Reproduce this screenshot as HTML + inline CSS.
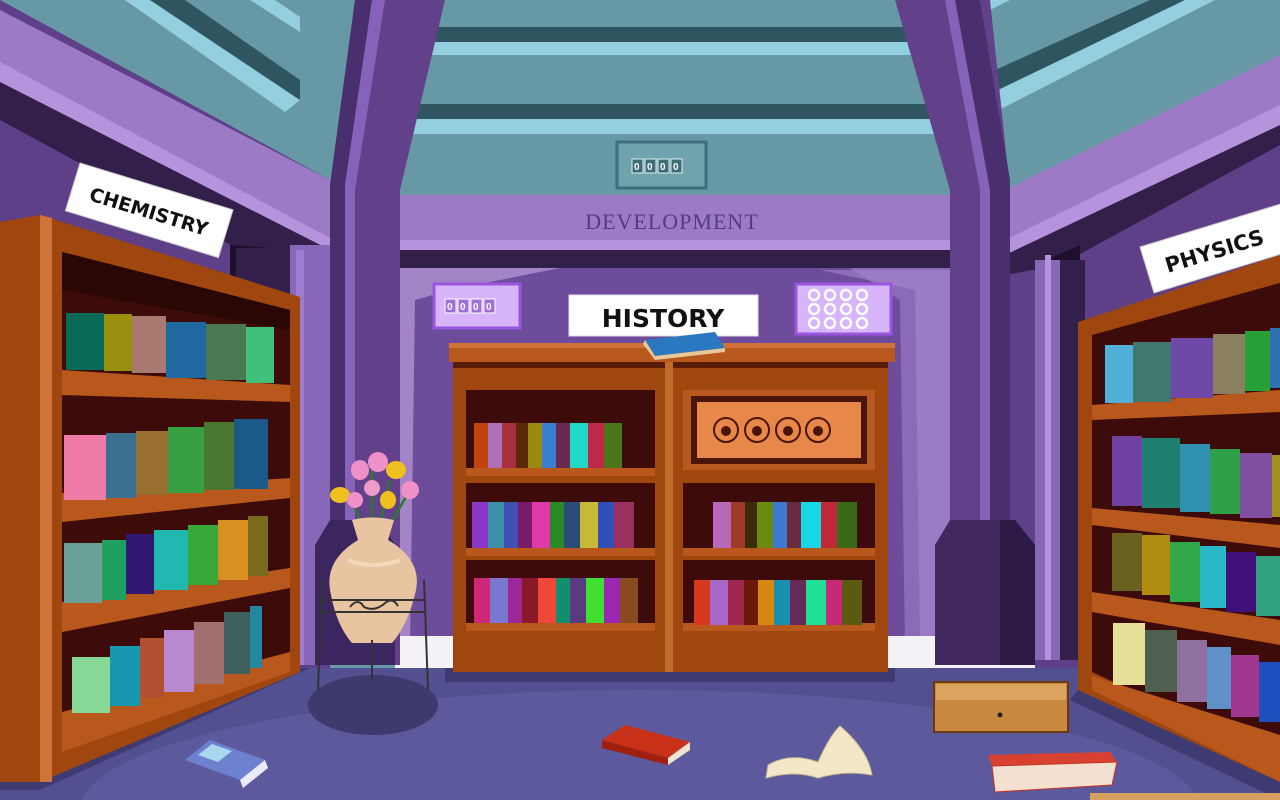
<!DOCTYPE html>
<html><head><meta charset="utf-8"><style>html,body{margin:0;padding:0;width:1280px;height:800px;overflow:hidden;background:#6699a5}svg{display:block}</style></head>
<body>
<svg width="1280" height="800" viewBox="0 0 1280 800" xmlns="http://www.w3.org/2000/svg">
<rect width="1280" height="800" fill="#6699a5"/>
<polygon points="125,0 150,0 300,100 285,112" fill="#93cfdf"/>
<polygon points="150,0 185,0 300,80 300,100" fill="#2f5560"/>
<polygon points="250,0 275,0 300,17 300,32" fill="#93cfdf"/>
<polygon points="1150,0 1185,0 940,118 940,95" fill="#2f5560"/>
<polygon points="1185,0 1215,0 940,140 940,118" fill="#93cfdf"/>
<polygon points="985,0 1010,0 940,35 940,20" fill="#93cfdf"/>
<rect x="400" y="27" width="550" height="15" fill="#2f5560"/>
<rect x="400" y="42" width="550" height="13" fill="#93cfdf"/>
<rect x="400" y="104" width="550" height="15" fill="#2f5560"/>
<rect x="400" y="119" width="550" height="15" fill="#93cfdf"/>
<rect x="617" y="142" width="89" height="46" fill="#6fa3ae" stroke="#3f6f7a" stroke-width="3"/>
<g fill="#3d6b76" stroke="#e0f0f4" stroke-width="1"><rect x="632" y="159" width="11" height="14"/><rect x="645" y="159" width="11" height="14"/><rect x="658" y="159" width="11" height="14"/><rect x="671" y="159" width="11" height="14"/></g>
<g font-family="Liberation Sans,sans-serif" font-size="10" fill="#fff" font-weight="bold"><text x="634" y="170">0</text><text x="647" y="170">0</text><text x="660" y="170">0</text><text x="673" y="170">0</text></g>
<polygon points="0,0 0,780 330,700 330,180" fill="#5e3f88"/>
<polygon points="0,10 0,70 330,245 330,180" fill="#9d7ac6"/>
<polygon points="0,62 0,82 330,250 330,238" fill="#b793dd"/>
<polygon points="0,82 0,120 240,250 330,265 330,250" fill="#33204a"/>
<polygon points="230,245 300,250 300,300 230,300" fill="#1e0f2c"/>
<rect x="236" y="248" width="55" height="420" fill="#33204a"/>
<rect x="290" y="245" width="40" height="420" fill="#8866b8"/>
<rect x="296" y="250" width="8" height="415" fill="#9f7cd0"/>
<polygon points="1010,250 1280,130 1280,780 1010,680" fill="#5e3f88"/>
<polygon points="1005,190 1280,55 1280,115 1005,250" fill="#9d7ac6"/>
<polygon points="1005,240 1280,105 1280,128 1005,258" fill="#b793dd"/>
<polygon points="1005,255 1280,125 1280,145 1060,265 1005,275" fill="#33204a"/>
<polygon points="1035,265 1080,245 1080,330 1035,330" fill="#1e0f2c"/>
<rect x="1035" y="260" width="30" height="400" fill="#8866b8"/>
<rect x="1045" y="255" width="6" height="405" fill="#b793dd"/>
<rect x="1060" y="260" width="25" height="400" fill="#33204a"/>
<rect x="395" y="195" width="560" height="46" fill="#9d7ac6"/>
<rect x="395" y="240" width="560" height="10" fill="#b793dd"/>
<rect x="395" y="250" width="560" height="18" fill="#33204a"/>
<rect x="395" y="268" width="560" height="380" fill="#6e4c9c"/>
<polygon points="400,268 560,268 450,290 415,300 410,648 400,648" fill="#a384c6"/>
<polygon points="850,268 955,268 955,648 905,648 900,300" fill="#8a6bb8"/>
<polygon points="820,270 955,270 955,640 920,640 915,290" fill="#a585cb" opacity="0.6"/>
<text x="672" y="229" text-anchor="middle" font-family="Liberation Serif,serif" font-size="22" fill="#563b7e" letter-spacing="1">DEVELOPMENT</text>
<rect x="395" y="636" width="640" height="32" fill="#f4f2f6"/>
<polygon points="355,0 445,0 400,190 400,665 330,665 330,185" fill="#62418a"/>
<polygon points="355,0 372,0 345,185 345,665 330,665 330,185" fill="#4a2f6e"/>
<polygon points="372,0 385,0 355,190 355,665 345,665 345,185" fill="#8663b8"/>
<polygon points="895,0 990,0 1010,190 1010,665 950,665 950,190" fill="#62418a"/>
<polygon points="955,0 980,0 1010,180 1010,665 990,665 990,190" fill="#4a2f6e"/>
<polygon points="945,0 955,0 990,190 990,665 980,665 980,190" fill="#8663b8"/>
<polygon points="950,520 1000,520 1000,665 935,665 935,545" fill="#41285f"/>
<polygon points="1000,520 1015,520 1035,545 1035,665 1000,665" fill="#2d1a47"/>
<polygon points="330,520 380,520 395,545 395,665 315,665 315,545" fill="#3c2660"/>
<polygon points="0,668 1280,668 1280,800 0,800" fill="#535092"/>
<ellipse cx="640" cy="810" rx="560" ry="120" fill="#5c5a9c"/>
<polygon points="0,780 300,668 310,668 40,790 0,790" fill="#3e3a72"/>
<polygon points="1078,690 1280,782 1280,800 1070,700" fill="#3e3a72"/>
<ellipse cx="373" cy="705" rx="65" ry="30" fill="#3d3a6e"/>
<rect x="445" y="668" width="450" height="14" fill="#3e3a72"/>
<rect x="434" y="284" width="86" height="44" fill="#d8b4fb" stroke="#9a55e0" stroke-width="3"/>
<g fill="#a070d8" stroke="#fff" stroke-width="1"><rect x="445" y="299" width="11" height="14"/><rect x="458" y="299" width="11" height="14"/><rect x="471" y="299" width="11" height="14"/><rect x="484" y="299" width="11" height="14"/></g>
<g font-family="Liberation Sans,sans-serif" font-size="10" fill="#fff" font-weight="bold"><text x="447" y="310">0</text><text x="460" y="310">0</text><text x="473" y="310">0</text><text x="486" y="310">0</text></g>
<rect x="796" y="284" width="95" height="50" fill="#d8b4fb" stroke="#9a55e0" stroke-width="3"/>
<g fill="none" stroke="#fff" stroke-width="2.5"><circle cx="814" cy="295" r="5"/><circle cx="830" cy="295" r="5"/><circle cx="846" cy="295" r="5"/><circle cx="862" cy="295" r="5"/><circle cx="814" cy="309" r="5"/><circle cx="830" cy="309" r="5"/><circle cx="846" cy="309" r="5"/><circle cx="862" cy="309" r="5"/><circle cx="814" cy="323" r="5"/><circle cx="830" cy="323" r="5"/><circle cx="846" cy="323" r="5"/><circle cx="862" cy="323" r="5"/></g>
<rect x="569" y="295" width="189" height="41" fill="#fff" stroke="#ddd"/>
<text x="663" y="327" text-anchor="middle" font-family="DejaVu Sans,Liberation Sans,sans-serif" font-weight="bold" font-size="25" fill="#111">HISTORY</text>
<rect x="453" y="360" width="435" height="312" fill="#a0460f"/>
<rect x="449" y="343" width="446" height="19" fill="#b8581c"/>
<rect x="449" y="343" width="446" height="5" fill="#d0733a"/>
<rect x="453" y="362" width="435" height="6" fill="#5a1c08"/>
<rect x="665" y="362" width="8" height="310" fill="#c06a2c"/>
<rect x="466" y="390" width="189" height="80" fill="#3d0c0a"/>
<rect x="466" y="483" width="189" height="67" fill="#3d0c0a"/>
<rect x="466" y="560" width="189" height="65" fill="#3d0c0a"/>
<rect x="683" y="483" width="192" height="67" fill="#3d0c0a"/>
<rect x="683" y="560" width="192" height="65" fill="#3d0c0a"/>
<rect x="683" y="390" width="192" height="80" fill="#b85a20"/>
<rect x="691" y="396" width="176" height="68" fill="#4a1408"/>
<rect x="697" y="402" width="164" height="56" fill="#e8874a"/>
<g fill="none" stroke="#4a1408" stroke-width="2"><circle cx="726" cy="430" r="12"/><circle cx="757" cy="430" r="12"/><circle cx="788" cy="430" r="12"/><circle cx="818" cy="430" r="12"/></g>
<g fill="#4a1408"><circle cx="726" cy="431" r="5"/><circle cx="757" cy="431" r="5"/><circle cx="788" cy="431" r="5"/><circle cx="818" cy="431" r="5"/></g>
<g fill="#b8581c"><rect x="466" y="468" width="189" height="8"/><rect x="466" y="548" width="189" height="8"/><rect x="466" y="623" width="189" height="8"/><rect x="683" y="548" width="192" height="8"/><rect x="683" y="623" width="192" height="8"/></g>
<g>
<rect x="474" y="423" width="14" height="45" fill="#c0440c"/><rect x="488" y="423" width="14" height="45" fill="#b070b8"/><rect x="502" y="423" width="14" height="45" fill="#a83040"/><rect x="516" y="423" width="12" height="45" fill="#5a2a08"/><rect x="528" y="423" width="14" height="45" fill="#9a8a10"/><rect x="542" y="423" width="14" height="45" fill="#3a80d0"/><rect x="556" y="423" width="14" height="45" fill="#6a2a50"/><rect x="570" y="423" width="18" height="45" fill="#20d8c8"/><rect x="588" y="423" width="16" height="45" fill="#c02848"/><rect x="604" y="423" width="18" height="45" fill="#4a7818"/>
<rect x="472" y="502" width="16" height="46" fill="#8a38c8"/><rect x="488" y="502" width="16" height="46" fill="#3a90a8"/><rect x="504" y="502" width="14" height="46" fill="#4050b0"/><rect x="518" y="502" width="14" height="46" fill="#7a1a6a"/><rect x="532" y="502" width="18" height="46" fill="#e038a8"/><rect x="550" y="502" width="14" height="46" fill="#2a8a28"/><rect x="564" y="502" width="16" height="46" fill="#2a4a78"/><rect x="580" y="502" width="18" height="46" fill="#c8b838"/><rect x="598" y="502" width="16" height="46" fill="#3050b8"/><rect x="614" y="502" width="20" height="46" fill="#9a3060"/>
<rect x="474" y="578" width="16" height="45" fill="#d02878"/><rect x="490" y="578" width="18" height="45" fill="#7878d0"/><rect x="508" y="578" width="14" height="45" fill="#9a2898"/><rect x="522" y="578" width="16" height="45" fill="#8a1828"/><rect x="538" y="578" width="18" height="45" fill="#f04838"/><rect x="556" y="578" width="14" height="45" fill="#10906a"/><rect x="570" y="578" width="16" height="45" fill="#5a3a80"/><rect x="586" y="578" width="18" height="45" fill="#40e030"/><rect x="604" y="578" width="16" height="45" fill="#9a28b0"/><rect x="620" y="578" width="18" height="45" fill="#8a4a20"/>
<rect x="713" y="502" width="18" height="46" fill="#b868b8"/><rect x="731" y="502" width="14" height="46" fill="#a03a28"/><rect x="745" y="502" width="12" height="46" fill="#3a2a08"/><rect x="757" y="502" width="16" height="46" fill="#6a8a10"/><rect x="773" y="502" width="14" height="46" fill="#3a7ad0"/><rect x="787" y="502" width="14" height="46" fill="#6a2a40"/><rect x="801" y="502" width="20" height="46" fill="#18d8e8"/><rect x="821" y="502" width="16" height="46" fill="#c02838"/><rect x="837" y="502" width="20" height="46" fill="#3a6a18"/>
<rect x="694" y="580" width="16" height="45" fill="#d83820"/><rect x="710" y="580" width="18" height="45" fill="#a868c8"/><rect x="728" y="580" width="16" height="45" fill="#a02850"/><rect x="744" y="580" width="14" height="45" fill="#6a1808"/><rect x="758" y="580" width="16" height="45" fill="#d88810"/><rect x="774" y="580" width="16" height="45" fill="#1890b0"/><rect x="790" y="580" width="16" height="45" fill="#6a2a58"/><rect x="806" y="580" width="20" height="45" fill="#20e098"/><rect x="826" y="580" width="16" height="45" fill="#c82878"/><rect x="842" y="580" width="20" height="45" fill="#5a5a10"/>
</g>
<polygon points="645,340 715,332 725,348 655,356" fill="#2a78c0"/><polygon points="645,340 655,356 725,348 725,352 655,360 643,344" fill="#e8c898"/>
<polygon points="0,222 40,215 300,297 300,672 40,782 0,782" fill="#a0460f"/>
<polygon points="40,215 52,218 52,782 40,782" fill="#d0733a"/>
<polygon points="62,252 290,310 290,660 62,748" fill="#3d0c0a"/>
<polygon points="62,252 290,310 290,330 62,290" fill="#2a0604"/>
<g fill="#b8581c">
<polygon points="62,370 290,385 290,402 62,395"/>
<polygon points="62,493 290,478 290,498 62,522"/>
<polygon points="62,602 290,568 290,588 62,632"/>
<polygon points="62,712 290,652 290,672 62,752"/>
</g>
<g>
<rect x="66" y="313" width="38" height="57" fill="#0a6a58"/><rect x="104" y="314" width="28" height="57" fill="#9a9010"/><rect x="132" y="316" width="34" height="57" fill="#a87a70"/><rect x="166" y="322" width="40" height="56" fill="#2068a0"/><rect x="206" y="324" width="40" height="56" fill="#4a7850"/><rect x="246" y="327" width="28" height="56" fill="#40c078"/>
<rect x="64" y="435" width="42" height="65" fill="#f07aa8"/><rect x="106" y="433" width="30" height="65" fill="#3a7090"/><rect x="136" y="431" width="32" height="64" fill="#9a7030"/><rect x="168" y="427" width="36" height="66" fill="#38a040"/><rect x="204" y="422" width="30" height="68" fill="#4a7830"/><rect x="234" y="419" width="34" height="70" fill="#1a5a88"/>
<rect x="64" y="543" width="38" height="60" fill="#6aa098"/><rect x="102" y="540" width="24" height="60" fill="#20a060"/><rect x="126" y="534" width="28" height="60" fill="#301870"/><rect x="154" y="530" width="34" height="60" fill="#20b8b0"/><rect x="188" y="525" width="30" height="60" fill="#38a838"/><rect x="218" y="520" width="30" height="60" fill="#d89020"/><rect x="248" y="516" width="20" height="60" fill="#7a6a20"/>
<rect x="72" y="657" width="38" height="56" fill="#88d898"/><rect x="110" y="646" width="30" height="60" fill="#1898b0"/><rect x="140" y="638" width="24" height="60" fill="#b05030"/><rect x="164" y="630" width="30" height="62" fill="#b888d0"/><rect x="194" y="622" width="30" height="62" fill="#a07070"/><rect x="224" y="612" width="26" height="62" fill="#406060"/><rect x="250" y="606" width="12" height="62" fill="#2088a0"/>
</g>
<g transform="translate(80,163) rotate(17)">
<rect x="0" y="0" width="160" height="50" fill="#fff" stroke="#ccc"/>
<text x="80" y="33" text-anchor="middle" font-family="DejaVu Sans,Liberation Sans,sans-serif" font-weight="bold" font-size="19" fill="#111">CHEMISTRY</text>
</g>
<polygon points="1078,322 1280,255 1280,782 1078,690" fill="#a0460f"/>
<polygon points="1092,335 1280,283 1280,760 1092,672" fill="#3d0c0a"/>
<g fill="#b8581c">
<polygon points="1092,405 1280,390 1280,412 1092,420"/>
<polygon points="1092,508 1280,525 1280,548 1092,525"/>
<polygon points="1092,592 1280,620 1280,645 1092,612"/>
<polygon points="1092,676 1280,735 1280,782 1092,690"/>
</g>
<g>
<rect x="1105" y="345" width="28" height="58" fill="#50b0d8"/><rect x="1133" y="342" width="38" height="60" fill="#407870"/><rect x="1171" y="338" width="42" height="60" fill="#7048a8"/><rect x="1213" y="334" width="32" height="60" fill="#8a8060"/><rect x="1245" y="331" width="25" height="60" fill="#28a038"/><rect x="1270" y="328" width="10" height="60" fill="#3070b0"/>
<rect x="1112" y="436" width="30" height="70" fill="#7040a0"/><rect x="1142" y="438" width="38" height="70" fill="#208070"/><rect x="1180" y="444" width="30" height="68" fill="#3090b0"/><rect x="1210" y="449" width="30" height="65" fill="#30a048"/><rect x="1240" y="453" width="32" height="65" fill="#8050a0"/><rect x="1272" y="455" width="8" height="62" fill="#a09020"/>
<rect x="1112" y="533" width="30" height="58" fill="#6a6020"/><rect x="1142" y="535" width="28" height="60" fill="#b08c10"/><rect x="1170" y="542" width="30" height="60" fill="#30a848"/><rect x="1200" y="546" width="26" height="62" fill="#28b8c8"/><rect x="1226" y="552" width="30" height="60" fill="#401078"/><rect x="1256" y="556" width="24" height="60" fill="#30a080"/>
<rect x="1113" y="623" width="32" height="62" fill="#e8e098"/><rect x="1145" y="630" width="32" height="62" fill="#506050"/><rect x="1177" y="640" width="30" height="62" fill="#9070a0"/><rect x="1207" y="647" width="24" height="62" fill="#6090c8"/><rect x="1231" y="655" width="28" height="62" fill="#a03890"/><rect x="1259" y="662" width="21" height="60" fill="#2050c0"/>
</g>
<g transform="translate(1140,247) rotate(-17)">
<rect x="0" y="0" width="150" height="48" fill="#fff" stroke="#ccc"/>
<text x="70" y="33" text-anchor="middle" font-family="DejaVu Sans,Liberation Sans,sans-serif" font-weight="bold" font-size="21" fill="#111">PHYSICS</text>
</g>
<g stroke="#2a7a28" stroke-width="2.5" fill="none"><path d="M370 545 L350 495 M375 545 L390 480 M372 545 L372 470 M378 545 L410 490"/></g>
<g>
<ellipse cx="340" cy="495" rx="10" ry="8" fill="#f0c020"/><ellipse cx="360" cy="470" rx="9" ry="10" fill="#f090c8"/><ellipse cx="378" cy="462" rx="10" ry="10" fill="#f090c8"/><ellipse cx="396" cy="470" rx="10" ry="9" fill="#f0c020"/><ellipse cx="410" cy="490" rx="9" ry="9" fill="#f090c8"/><ellipse cx="355" cy="500" rx="8" ry="8" fill="#f090c8"/><ellipse cx="388" cy="500" rx="8" ry="9" fill="#f0c020"/><ellipse cx="372" cy="488" rx="8" ry="8" fill="#f09ac8"/>
</g>
<path d="M352 520 Q372 515 394 520 L388 540 Q422 560 416 590 Q408 625 392 643 L352 643 Q336 625 330 590 Q325 560 358 540 Z" fill="#e9c4a0"/>
<path d="M348 560 Q372 570 400 560" stroke="#f4d8bc" stroke-width="4" fill="none"/>
<g stroke="#333" stroke-width="2" fill="none"><path d="M318 600 L426 600 M320 612 L424 612 M322 580 L318 690 M424 580 L428 690 M372 640 L372 680"/><path d="M350 607 q8 -10 14 0 q10 5 20 -3 q8 -8 14 2"/></g>
<polygon points="185,760 210,740 265,760 240,780" fill="#6e80d0"/><polygon points="240,780 265,760 268,768 243,788" fill="#eaeaf8"/><polygon points="198,755 212,744 232,751 218,762" fill="#a8d8f0"/>
<polygon points="602,740 625,725 690,742 668,758" fill="#c83018"/><polygon points="668,758 690,742 690,750 668,765" fill="#f0e4d0"/><polygon points="602,740 668,758 668,765 602,748" fill="#a02010"/>
<path d="M768 765 Q790 752 818 762 Q830 735 840 726 Q868 750 872 775 Q845 770 818 778 Q795 770 766 778 Z" fill="#f2e8c8" stroke="#c8b890"/>
<rect x="934" y="682" width="134" height="50" fill="#c98a3f" stroke="#6a3a10" stroke-width="2"/><rect x="936" y="684" width="130" height="16" fill="#dca460"/><circle cx="1000" cy="715" r="2.5" fill="#222"/>
<polygon points="988,755 1110,752 1117,762 992,766" fill="#d84030"/><polygon points="992,766 1117,762 1112,785 995,792" fill="#f4e0d0" stroke="#c83020"/>
<rect x="1090" y="793" width="190" height="7" fill="#d8a060"/>
</svg>
</body></html>
